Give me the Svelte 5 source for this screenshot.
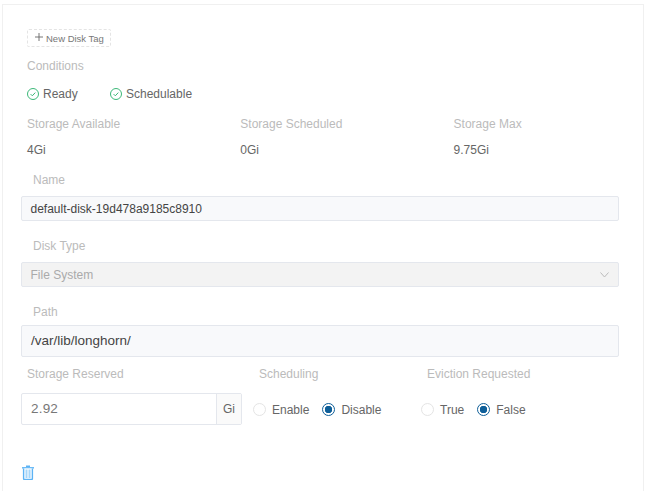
<script>
  const storage = [
    { label: 'Storage Available', value: '4Gi' },
    { label: 'Storage Scheduled', value: '0Gi' },
    { label: 'Storage Max', value: '9.75Gi' },
  ];
</script>

<div class="card">
  <div class="top">
    <button class="tag">
      <svg class="plus" width="8" height="8" viewBox="0 0 8 8"><path d="M4 0v8M0 4h8" stroke="#666" stroke-width=".9" fill="none" /></svg>
      New Disk Tag
    </button>
    <div class="label conditions">Conditions</div>
    <div class="status">
      <span class="cond ready">
        <svg width="12" height="12" viewBox="0 0 12 12"><circle cx="6" cy="6" r="5.5" fill="none" stroke="#3cb878" /><path d="M3.6 6.1l1.7 1.7 3-3.2" fill="none" stroke="#3cb878" /></svg>
        Ready
      </span>
      <span class="cond">
        <svg width="12" height="12" viewBox="0 0 12 12"><circle cx="6" cy="6" r="5.5" fill="none" stroke="#3cb878" /><path d="M3.6 6.1l1.7 1.7 3-3.2" fill="none" stroke="#3cb878" /></svg>
        Schedulable
      </span>
    </div>
    <div class="stats">
      {#each storage as s}
        <div>
          <div class="label">{s.label}</div>
          <div class="value">{s.value}</div>
        </div>
      {/each}
    </div>
  </div>

  <div class="field-label name-label">Name</div>
  <div class="input small">default-disk-19d478a9185c8910</div>

  <div class="field-label type-label">Disk Type</div>
  <div class="input small disabled">
    File System
    <svg width="9" height="6" viewBox="0 0 9 6"><path d="M.5.5L4.500 5 8.500.5" fill="none" stroke="#bbb" /></svg>
  </div>

  <div class="field-label path-label">Path</div>
  <div class="input large">/var/lib/longhorn/</div>

  <div class="bottom">
    <div class="col-reserved">
      <div class="label">Storage Reserved</div>
      <div class="group">
        <div class="number">2.92</div>
        <div class="addon">Gi</div>
      </div>
    </div>
    <div class="col-sched">
      <div class="label">Scheduling</div>
      <div class="radios">
        <span class="radio"><i></i><span>Enable</span></span>
        <span class="radio on"><i></i><span>Disable</span></span>
      </div>
    </div>
    <div class="col-evict">
      <div class="label">Eviction Requested</div>
      <div class="radios">
        <span class="radio"><i></i><span>True</span></span>
        <span class="radio on"><i></i><span>False</span></span>
      </div>
    </div>
  </div>

  <svg class="trash" width="12" height="15" viewBox="0 0 12 15">
    <path d="M4 2.500V.5h4v2z" fill="#5cb3f5" />
    <path d="M0 2h12v1.600H0z" fill="#6dbbf6" />
    <path d="M1.600 3.400v10.400a.6.6 0 0 0 .6.6h7.600a.6.6 0 0 0 .6-.6V3.400" fill="#fff" stroke="#5cb3f5" stroke-width="1.400" />
    <path d="M3.500 4.500h2v8.500h-2zM6.500 4.500h2v8.500h-2z" fill="#a5d6fa" />
  </svg>
</div>

<style>
  :global(body) { background: #fff; font-family: "Liberation Sans", Arial, sans-serif; font-size: 12px; color: #666; }
  .card { margin: 4px 4px 0 2px; height: 487px; box-sizing: border-box; border: 1px solid #f0f0f0; border-bottom: 0; padding: 24px 24px 0 18px; }

  .top { padding-left: 6px; }
  .tag { display: flex; align-items: center; gap: 3px; height: 18px; width: 84px; box-sizing: border-box; padding: 0 0 0 7px; background: #fff; border: 1px dashed #e4e4e4; border-radius: 2px; font: 9.500px "Liberation Sans", Arial, sans-serif; color: #777; }
  .plus { margin-top: -2px; }
  .label { color: #bbb; line-height: 14px; }
  .conditions { margin-top: 12px; }
  .status { display: flex; margin-top: 14px; height: 14px; line-height: 14px; }
  .cond { display: flex; align-items: center; gap: 4px; }
  .ready { width: 83px; }
  .stats { display: grid; grid-template-columns: repeat(3, 213.3px); margin-top: 16px; }
  .value { margin-top: 12px; line-height: 14px; }

  .field-label { color: #bbb; line-height: 14px; padding-left: 12px; }
  .name-label { margin-top: 16px; }
  .type-label { margin-top: 18px; }
  .path-label { margin-top: 18px; }
  .input { box-sizing: border-box; border: 1px solid #e4e7ed; border-radius: 2px; background: #f8f9fb; padding: 0 9px 0 8.500px; display: flex; align-items: center; justify-content: space-between; color: #444; width: 598px; }
  .small { height: 25px; margin-top: 9px; }
  .disabled { background: #f3f3f3; color: #aaa; }
  .large { height: 32px; margin-top: 6px; padding: 0 9px 2px; font-size: 13.500px; }

  .bottom { display: flex; margin-top: 10px; }
  .bottom .label { padding-left: 6px; }
  .col-reserved { width: 232px; }
  .col-sched { width: 168px; }
  .group { display: flex; height: 32px; width: 221px; margin-top: 12px; box-sizing: border-box; border: 1px solid #e4e7ed; border-radius: 2px; }
  .number { flex: 1; padding-left: 9px; line-height: 30px; font-size: 13.500px; letter-spacing: .2px; color: #777; }
  .addon { width: 24px; border-left: 1px solid #e4e7ed; background: #fafafa; text-align: center; line-height: 30px; }
  .radios { display: flex; gap: 13px; margin-top: 12px; height: 33px; align-items: center; }
  .radio { display: flex; align-items: center; gap: 6px; }
  .radio span { padding-top: 1px; }
  .radio i { width: 13px; height: 13px; box-sizing: border-box; border: 1px solid #e4e4e4; border-radius: 50%; background: #fff; }
  .radio.on i { border-color: #0f5f99; background: radial-gradient(circle, #0f5f99 0 3.500px, #fff 4px); }
  .trash { display: block; margin: 39px 0 0 1px; }
</style>
